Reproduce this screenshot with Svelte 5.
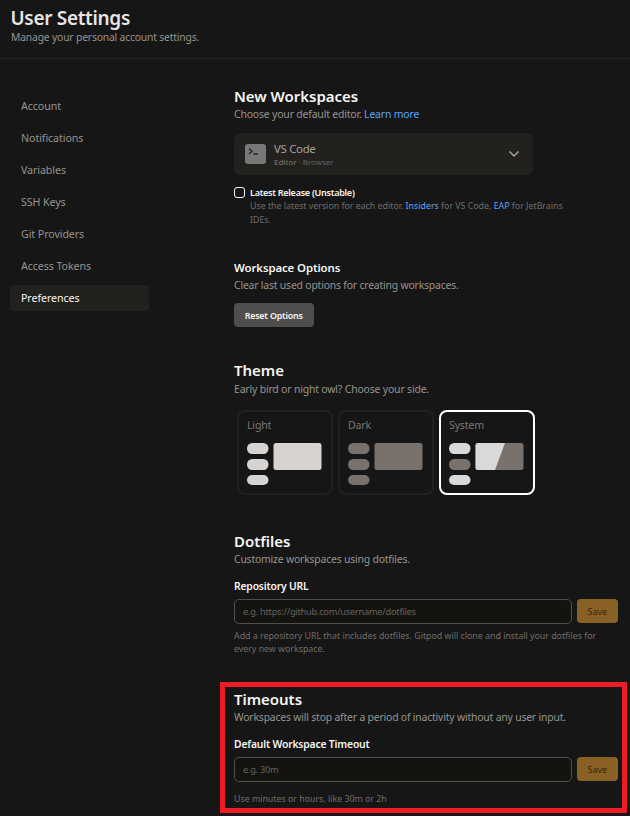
<script>
  const nav = ['Account', 'Notifications', 'Variables', 'SSH Keys', 'Git Providers', 'Access Tokens', 'Preferences'];
  const light = '#d6d3d1';
  const dark = '#78716c';
  const sys = '#d9d9d9';
  const themes = [
    { name: 'Light', pills: [light, light, light], box: light },
    { name: 'Dark', pills: [dark, dark, dark], box: dark },
    { name: 'System', pills: [sys, dark, sys], box: dark, split: sys, selected: true }
  ];
</script>

<div class="page">
  <header>
    <h1>User Settings</h1>
    <p class="sub manage">Manage your personal account settings.</p>
  </header>
  <div class="body">
    <nav>
      {#each nav as item}
        <a class:active={item === 'Preferences'}><span>{item}</span></a>
      {/each}
    </nav>
    <main>
      <section class="workspaces">
        <h2>New Workspaces</h2>
        <p class="sub choose">Choose your default editor. <a>Learn more</a></p>
        <div class="select">
          <svg class="term" width="21" height="20" viewBox="0 0 21 20">
            <rect width="21" height="20" rx="3" fill="#787878" />
            <path d="M4 4.500l3 2.700-3 2.700M8.300 10h4.400" fill="none" stroke="#23211e" stroke-width="1.300" />
          </svg>
          <div class="editor">
            <span class="name">VS Code</span>
            <span class="kind"><b>Editor</b> · Browser</span>
          </div>
          <svg width="12" height="8" viewBox="0 0 12 8">
            <path d="M1.500 1.500L6 6l4.500-4.500" fill="none" stroke="#a8a29e" stroke-width="1.500" />
          </svg>
        </div>
        <div class="check">
          <span class="box"></span>
          <div>
            <p class="label">Latest Release (Unstable)</p>
            <p class="hint">Use the latest version for each editor. <a>Insiders</a> for VS Code, <a>EAP</a> for JetBrains<br />IDEs.</p>
          </div>
        </div>
      </section>
      <section class="options">
        <h3>Workspace Options</h3>
        <p class="sub clear">Clear last used options for creating workspaces.</p>
        <button class="reset"><span>Reset Options</span></button>
      </section>
      <section class="theme">
        <h2>Theme</h2>
        <p class="sub early">Early bird or night owl? Choose your side.</p>
        <div class="cards">
          {#each themes as t}
            <div class="card" class:selected={t.selected}>
              <span>{t.name}</span>
              <svg width="75" height="42" viewBox="0 0 75 42">
                {#each t.pills as fill, i}
                  <rect x="0" y={i * 16} width="21.500" height={i === 2 ? 10 : 11} rx="5.200" {fill} />
                {/each}
                <rect x="26.500" y="0" width="48" height="27" rx="2.500" fill={t.box} />
                {#if t.split}
                  <path d="M29 0H56L46 27H29a2.500 2.500 0 0 1-2.500-2.500V2.500a2.500 2.500 0 0 1 2.500-2.500z" fill={t.split} />
                {/if}
              </svg>
            </div>
          {/each}
        </div>
      </section>
      <section class="dotfiles">
        <h2>Dotfiles</h2>
        <p class="sub custom">Customize workspaces using dotfiles.</p>
        <h3 class="tight">Repository URL</h3>
        <div class="field">
          <input placeholder="e.g. https://github.com/username/dotfiles" />
          <button class="save"><span>Save</span></button>
        </div>
        <p class="hint add">Add a repository URL that includes dotfiles. Gitpod will clone and install your dotfiles for<br />every new workspace.</p>
      </section>
      <section class="timeouts">
        <h2>Timeouts</h2>
        <p class="sub stop">Workspaces will stop after a period of inactivity without any user input.</p>
        <h3 class="tight">Default Workspace Timeout</h3>
        <div class="field">
          <input placeholder="e.g. 30m" />
          <button class="save"><span>Save</span></button>
        </div>
        <p class="hint use">Use minutes or hours, like 30m or 2h</p>
      </section>
    </main>
  </div>
  <div class="highlight"></div>
</div>

<style>
  :global(body) { margin: 0; background: #161616; }
  .page {
    position: relative; box-sizing: border-box; width: 630px; height: 816px; overflow: hidden;
    background: #161616; color: #f5f5f4; font-family: "Noto Sans", "Open Sans", sans-serif;
  }
  h1, h2, h3, p { margin: 0; white-space: nowrap; }
  header { box-sizing: border-box; height: 59px; padding: 7px 10.5px 0; border-bottom: 1px solid #232323; }
  h1 { font-size: 19px; line-height: 22px; font-weight: 600; letter-spacing: -0.32px; color: #e7e5e4; }
  h2 { font-size: 15px; line-height: 20px; font-weight: 600; letter-spacing: -0.03px; }
  h3 { font-size: 11.4px; line-height: 16px; font-weight: 600; letter-spacing: -0.1px; }
  h3.tight { width: max-content; letter-spacing: -0.2px; transform: scaleX(0.908); transform-origin: left; }
  .sub { width: max-content; font-size: 11.4px; line-height: 16px; color: #979490; letter-spacing: -0.2px; transform: scaleX(0.912); transform-origin: left; }
  .manage { transform: scaleX(0.908); }
  .choose, .early { transform: scaleX(0.918); }
  .sub a, .hint a { color: #5ba4fb; }
  .body { display: flex; }
  nav { width: 139px; padding: 34px 0 0 10px; display: flex; flex-direction: column; gap: 6px; }
  nav a { padding-left: 11px; height: 26px; line-height: 26px; border-radius: 4px; font-size: 11.4px; color: #979490; letter-spacing: -0.1px; }
  nav a span { display: inline-block; transform: scaleX(0.937); transform-origin: left; }
  nav a.active { background: #23211e; color: #f5f5f4; }
  main { margin-left: 85px; width: 384px; padding-top: 27px; }
  .workspaces { height: 174px; }
  .select { box-sizing: border-box; margin-top: 11px; width: 299px; height: 42px; border-radius: 6px; background: #23211e; display: flex; align-items: center; padding: 0 13px 0 11px; }
  .editor { flex: 1; display: flex; flex-direction: column; margin: 2px 0 0 8px; }
  .name { font-size: 11.4px; line-height: 14px; color: #a8a29e; letter-spacing: -0.3px; }
  .kind { font-size: 7.9px; line-height: 12px; color: #65615d; }
  .kind b { font-weight: 500; color: #716d69; }
  .check { display: flex; margin-top: 11px; gap: 5px; }
  .box { box-sizing: border-box; flex: none; width: 11px; height: 11px; margin-top: 1px; border: 1px solid #f5f5f4; border-radius: 3px; }
  .label { width: max-content; font-size: 9.5px; line-height: 13px; font-weight: 600; letter-spacing: -0.3px; transform: scaleX(0.955); transform-origin: left; }
  .hint { width: max-content; font-size: 9.4px; line-height: 14px; color: #716d69; transform: scaleX(0.939); transform-origin: left; }
  .options { height: 100px; }
  .options .sub { margin-top: 1px; }
  button { border: 0; padding: 0; font-family: inherit; font-size: 9.4px; border-radius: 4px; }
  button span { display: inline-block; transform: scaleX(0.945); }
  .reset { display: block; margin-top: 10px; width: 80px; height: 24px; background: #4f4e4c; color: #f5f5f4; font-weight: 600; letter-spacing: -0.2px; }
  .theme { height: 171px; }
  .theme .sub { margin-top: 1px; }
  .cards { display: flex; gap: 5px; margin: 13px 0 0 3px; }
  .card { box-sizing: border-box; width: 96px; height: 85px; border: 2px solid #23211e; border-radius: 8px; padding: 5px 0 0 8px; }
  .card.selected { border-color: #fff; }
  .card span { display: block; width: max-content; font-size: 11.4px; line-height: 16px; color: #797673; letter-spacing: -0.2px; transform: scaleX(0.93); transform-origin: left; }
  .card svg { display: block; margin-top: 10px; }
  .dotfiles { height: 158px; }
  .dotfiles h3, .timeouts h3 { margin-top: 11px; }
  .field { display: flex; gap: 5px; margin-top: 5px; align-items: flex-start; }
  input { box-sizing: border-box; width: 338px; height: 25px; border: 1px solid #4f4e4a; border-radius: 5px; background: #14130f; padding: 0 8px; font-family: inherit; font-size: 9.3px; letter-spacing: -0.27px; color: #f5f5f4; }
  input::placeholder { color: #65625e; opacity: 1; }
  .save { width: 41px; height: 24px; background: #8a6124; color: #30240f; }
  .add { line-height: 13px; margin-top: 5px; }
  .use { margin-top: 10px; }
  .highlight { position: absolute; box-sizing: border-box; left: 220px; top: 682px; width: 407px; height: 131px; border: 5px solid #ed1c24; }
</style>
